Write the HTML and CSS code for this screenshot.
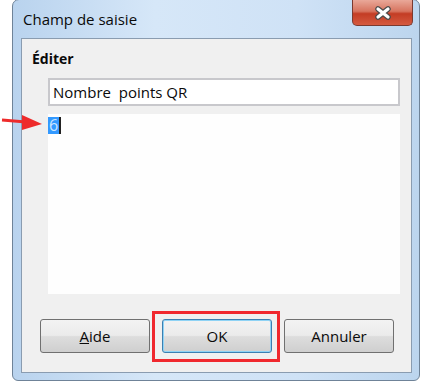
FILE: index.html
```html
<!DOCTYPE html>
<html lang="fr">
<head>
  <meta charset="UTF-8">
  <title>Champ de saisie</title>
  <link rel="stylesheet" href="styles.css">
</head>
<body>
  <div class="window">
    <div class="titlebar">
      <span class="title">Champ de saisie</span>
      <div class="close">
        <svg width="20" height="14" viewBox="0 0 20 14">
          <path d="M5 3 L15 11 M15 3 L5 11" stroke="#4a4a4a" stroke-width="5.5" stroke-linecap="round"/>
          <path d="M5 3 L15 11 M15 3 L5 11" stroke="#fff" stroke-width="3.2" stroke-linecap="round"/>
        </svg>
      </div>
    </div>

    <div class="client">
      <div class="label">Éditer</div>
      <div class="field">Nombre&nbsp; points QR</div>
      <div class="editor"><span class="sel">6</span><span class="caret"></span></div>

      <div class="buttons">
        <button class="btn"><u>A</u>ide</button>
        <button class="btn default">OK</button>
        <button class="btn">Annuler</button>
      </div>
    </div>
  </div>

  <!-- annotations -->
  <svg class="arrow" width="46" height="20" viewBox="0 0 46 20">
    <path d="M2 7 L26 9" stroke="#ee2b2b" stroke-width="3"/>
    <path d="M22 2 L42 11 L22 17 Z" fill="#ee2b2b"/>
  </svg>
  <div class="redbox"></div>
</body>
</html>
```

FILE: styles.css
```css
body {
  margin: 0;
  background: #fff;
  font-family: "Open Sans", "Noto Sans", sans-serif;
  position: relative;
  width: 423px;
  height: 384px;
  overflow: hidden;
}

.window {
  margin-left: 12px;
  width: 408px;
  height: 382px;
  margin-top: -1px;
  box-sizing: border-box;
  padding: 0 7px 7px 8px;
  border: 1px solid #6f8398;
  border-radius: 7px 7px 6px 6px;
  background: linear-gradient(90deg, #b9d3ee 0%, #d6e7f8 35%, #cfe2f6 70%, #bcd5ee 100%);
  display: flex;
  flex-direction: column;
}

.titlebar {
  height: 38px;
  display: flex;
  justify-content: space-between;
  align-items: flex-start;
}

.title {
  margin-top: 9px;
  margin-left: 2px;
  font-size: 15px;
  color: #0a0a0a;
}

.close {
  width: 61px;
  height: 26px;
  margin-right: -1px;
  box-sizing: border-box;
  border: 1px solid #7a3a30;
  border-top: none;
  border-radius: 0 0 5px 5px;
  background: linear-gradient(#e9a899 0%, #d7745f 45%, #c33c24 55%, #d55a40 100%);
  display: flex;
  align-items: center;
  justify-content: center;
}

.client {
  flex: 1;
  background: #f0f0f0;
  border: 1px solid #8a9cb0;
  position: relative;
}

.label {
  font-weight: bold;
  font-size: 14px;
  margin: 10px 0 0 10px;
  height: 20px;
  color: #0a0a0a;
}

.field {
  margin: 9px 11px 0 26px;
  height: 28px;
  box-sizing: border-box;
  border: 2px solid #c8c8cc;
  background: #fff;
  font-size: 15px;
  line-height: 24px;
  padding-left: 3px;
  color: #0a0a0a;
}

.editor {
  margin: 8px 11px 0 26px;
  height: 180px;
  background: #fefefe;
  padding-top: 3px;
  box-sizing: border-box;
  display: flex;
  align-items: flex-start;
}

.sel {
  background: #3399ff;
  color: #cde6ff;
  font-size: 16px;
  line-height: 17px;
  padding: 0 1px;
}

.caret {
  width: 2px;
  height: 17px;
  background: #222;
}

.buttons {
  display: flex;
  gap: 12px;
  margin: 25px 0 0 18px;
}

.btn {
  width: 110px;
  height: 34px;
  border: 1px solid #707070;
  border-radius: 3px;
  background: linear-gradient(#f3f3f3 0%, #ebebeb 48%, #dddddd 52%, #cfcfcf 100%);
  font-family: "Open Sans", "Noto Sans", sans-serif;
  font-size: 15px;
  color: #0a0a0a;
  padding: 0;
}

.btn.default {
  border-color: #3c7fb1;
  box-shadow: inset 0 0 0 1px #8fd3f5;
}

.arrow {
  position: absolute;
  left: 0;
  top: 113px;
}

.redbox {
  position: absolute;
  left: 152px;
  top: 311px;
  width: 128px;
  height: 51px;
  box-sizing: border-box;
  border: 3px solid #f0282e;
}
```
